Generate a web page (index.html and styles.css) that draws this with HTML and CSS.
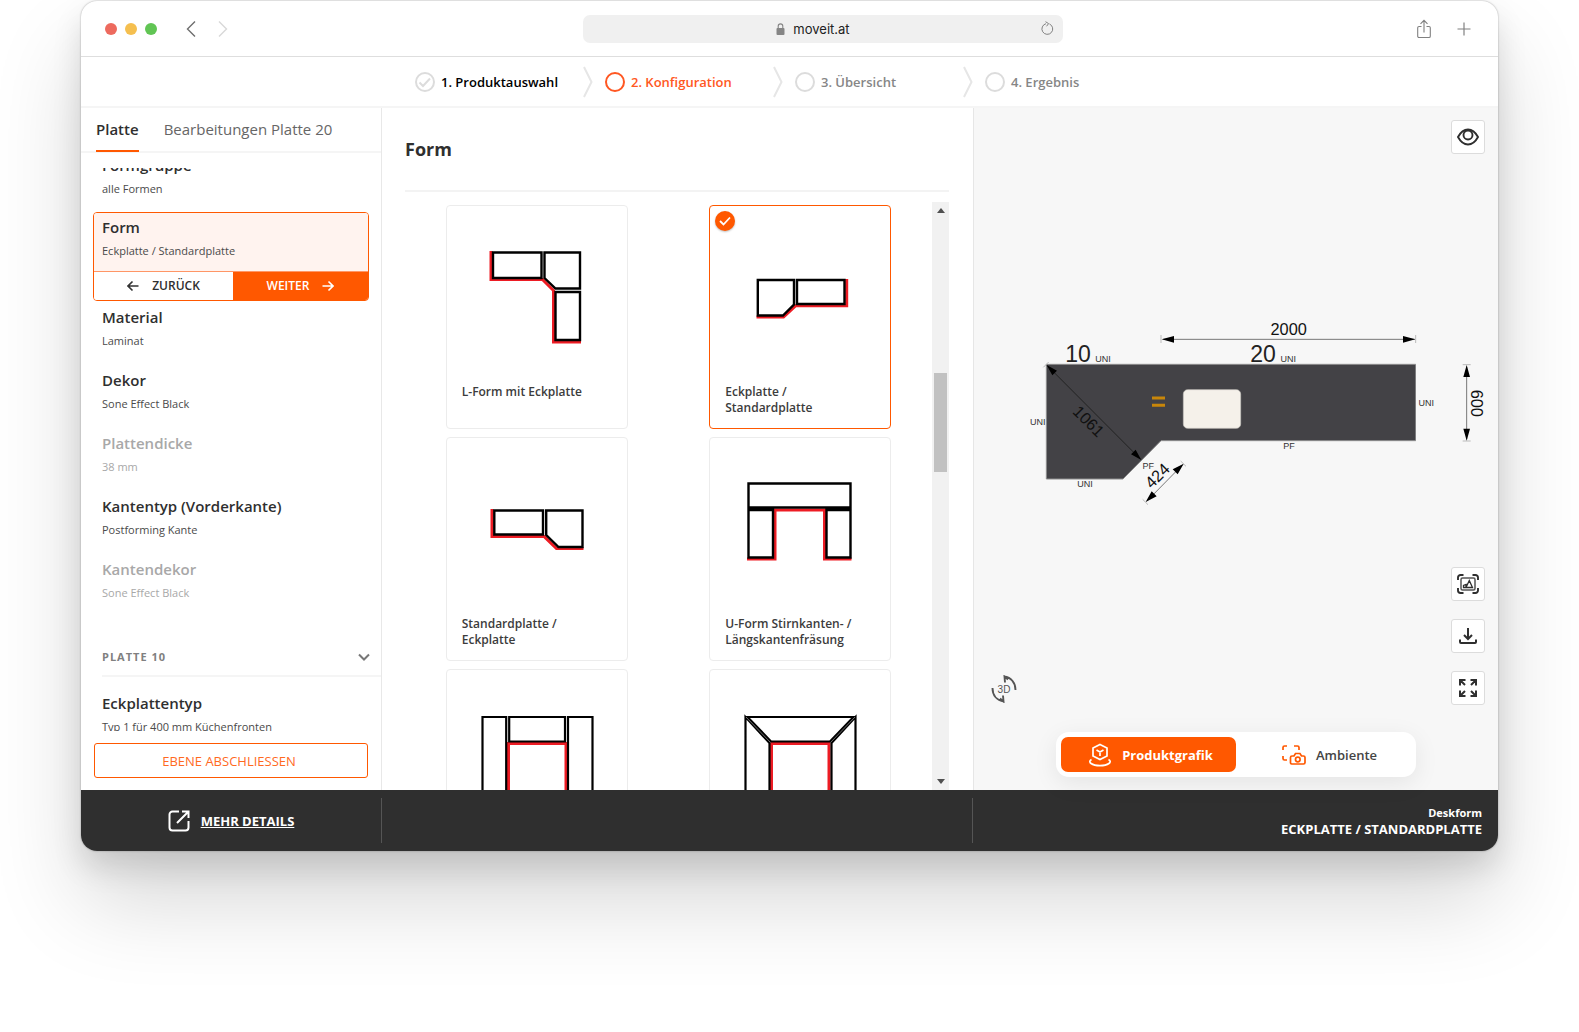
FILE: index.html
```html
<!DOCTYPE html>
<html lang="de">
<head>
<meta charset="utf-8">
<meta name="viewport" content="width=device-width, initial-scale=1">
<title>moveit.at – Konfiguration</title>
<link rel="stylesheet" href="styles.css">
</head>
<body>
<div class="window">
  <header class="titlebar">
    <div class="lights"><span class="light red"></span><span class="light yellow"></span><span class="light green"></span></div>
    <div class="history">
      <button class="plain" aria-label="Zurück"><svg width="10" height="18" viewBox="0 0 10 18"><path d="M9 1.500L1.500 9L9 16.500" fill="none" stroke="#6e6e6e" stroke-width="1.400"/></svg></button>
      <button class="plain" aria-label="Vor"><svg width="10" height="18" viewBox="0 0 10 18"><path d="M1 1.500L8.500 9L1 16.500" fill="none" stroke="#d8d8d8" stroke-width="1.400"/></svg></button>
    </div>
    <div class="address">
      <svg width="9" height="12" viewBox="0 0 9 12"><rect x="0.500" y="5" width="8" height="7" rx="1" fill="#858585"/><path d="M2.200 5.500V3.200a2.300 2.300 0 0 1 4.600 0v2.300" fill="none" stroke="#858585" stroke-width="1.100"/></svg>
      <span>moveit.at</span>
      <button class="plain reload" aria-label="Neu laden"><svg width="14" height="15" viewBox="0 0 14 15"><path d="M9.500 3A5.400 5.400 0 1 1 6 2.700M5.500 0.700L8.600 2.600L6.500 5.300" fill="none" stroke="#808080" stroke-width="1"/></svg></button>
    </div>
    <div class="bar-actions">
      <button class="plain" aria-label="Teilen"><svg width="14" height="20" viewBox="0 0 14 20"><path d="M4.500 7.500H2a1.300 1.300 0 0 0-1.300 1.300v8.400a1.300 1.300 0 0 0 1.300 1.300h10a1.300 1.300 0 0 0 1.300-1.300V8.800A1.300 1.300 0 0 0 12 7.500H9.500M7 13.500V1.500M3.500 4.800L7 1.300l3.500 3.500" fill="none" stroke="#808080" stroke-width="1.100"/></svg></button>
      <button class="plain" aria-label="Neuer Tab"><svg width="14" height="14" viewBox="0 0 14 14"><path d="M7 0.500v13M0.500 7h13" stroke="#808080" stroke-width="1.200"/></svg></button>
    </div>
  </header>

  <nav class="steps">
    <a href="#" class="step done"><svg width="20" height="20" viewBox="0 0 20 20"><circle cx="10" cy="10" r="9" fill="none" stroke="#dcdcdc" stroke-width="2"/><path d="M4.500 10.500l3.500 3.500l7-7.500" fill="none" stroke="#dcdcdc" stroke-width="2"/></svg>1. Produktauswahl</a>
    <svg class="sep" width="10" height="32" viewBox="0 0 10 32"><path d="M1 1L8.500 16L1 31" fill="none" stroke="#e6e6e6" stroke-width="2"/></svg>
    <a href="#" class="step current"><span class="ring"></span>2. Konfiguration</a>
    <svg class="sep" width="10" height="32" viewBox="0 0 10 32"><path d="M1 1L8.500 16L1 31" fill="none" stroke="#e6e6e6" stroke-width="2"/></svg>
    <a href="#" class="step"><span class="ring"></span>3. Übersicht</a>
    <svg class="sep" width="10" height="32" viewBox="0 0 10 32"><path d="M1 1L8.500 16L1 31" fill="none" stroke="#e6e6e6" stroke-width="2"/></svg>
    <a href="#" class="step"><span class="ring"></span>4. Ergebnis</a>
  </nav>

  <main class="workspace">
    <aside class="sidebar">
      <div class="tabs"><button class="tab active">Platte</button><button class="tab">Bearbeitungen Platte 20</button></div>
      <div class="list">
        <section class="item first"><h3>Formgruppe</h3><p>alle Formen</p></section>
        <div class="selected">
          <section class="item"><h3>Form</h3><p>Eckplatte / Standardplatte</p></section>
          <div class="nav-buttons">
            <button class="back"><svg width="12" height="12" viewBox="0 0 12 12"><path d="M11.500 6H1.500M5.500 1.500L1 6l4.500 4.500" fill="none" stroke="#333" stroke-width="1.600"/></svg>ZURÜCK</button>
            <button class="next">WEITER<svg width="12" height="12" viewBox="0 0 12 12"><path d="M0.500 6H10.500M6.500 1.500L11 6l-4.500 4.500" fill="none" stroke="#fff" stroke-width="1.600"/></svg></button>
          </div>
        </div>
        <section class="item"><h3>Material</h3><p>Laminat</p></section>
        <section class="item"><h3>Dekor</h3><p>Sone Effect Black</p></section>
        <section class="item off"><h3>Plattendicke</h3><p>38 mm</p></section>
        <section class="item"><h3>Kantentyp (Vorderkante)</h3><p>Postforming Kante</p></section>
        <section class="item off"><h3>Kantendekor</h3><p>Sone Effect Black</p></section>
        <button class="group">PLATTE 10<svg width="12" height="8" viewBox="0 0 12 8"><path d="M1 1.500l5 5l5-5" fill="none" stroke="#777" stroke-width="2"/></svg></button>
        <section class="item last"><h3>Eckplattentyp</h3><p>Typ 1 für 400 mm Küchenfronten</p></section>
      </div>
      <button class="finish">EBENE ABSCHLIESSEN</button>
    </aside>

    <section class="chooser">
      <h2>Form</h2>
      <div class="scroller">
        <div class="cards">
          <button class="card">
            <svg viewBox="0 0 180 174" fill="none"><path d="M44 45V73.500H95.500L106.500 84.500V136H134" stroke="#ed1c24" stroke-width="3"/><path d="M46 46.500H94.500V72H46ZM97.500 46.500H133V82.500H108.500L97.500 72ZM108.500 86H133V134H108.500Z" fill="#fff" stroke="#000" stroke-width="2.400"/></svg>
            <span>L-Form mit Eckplatte</span>
          </button>
          <button class="card chosen">
            <i class="badge"><svg width="12" height="10" viewBox="0 0 12 10"><path d="M1 5l3.500 3.500L11 1.500" fill="none" stroke="#fff" stroke-width="1.800"/></svg></i>
            <svg viewBox="0 0 180 174" fill="none"><path d="M46.500 111H73.500L85.500 99.800H136.700V73" stroke="#ed1c24" stroke-width="3"/><path d="M47.800 74H84V98.500L73 109.500H47.800ZM87 74H134.500V98H87Z" fill="#fff" stroke="#000" stroke-width="2.400"/></svg>
            <span>Eckplatte / Standardplatte</span>
          </button>
          <button class="card">
            <svg viewBox="0 0 180 174" fill="none"><path d="M45 71V98.500H97L109.500 110.500H136.500" stroke="#ed1c24" stroke-width="3"/><path d="M47.300 72.500H96V96.500H47.300ZM99.200 72.500H135.500V109H111.500L99.200 97Z" fill="#fff" stroke="#000" stroke-width="2.400"/></svg>
            <span>Standardplatte / Eckplatte</span>
          </button>
          <button class="card">
            <svg viewBox="0 0 180 174" fill="none"><path d="M37 121H65V72H114.500V121H141.500" stroke="#ed1c24" stroke-width="3"/><path d="M38.500 45.500H140.500V69.500H38.500ZM38.500 72H63V119.500H38.500ZM116.500 72H140.500V119.500H116.500Z" fill="#fff" stroke="#000" stroke-width="2.400"/></svg>
            <span>U-Form Stirnkanten- / Längskantenfräsung</span>
          </button>
          <button class="card" aria-label="U-Form">
            <svg viewBox="0 0 180 174" fill="none"><path d="M61.500 140V73.500H119V140" stroke="#ed1c24" stroke-width="3"/><path d="M35.500 47H59.200V160H35.500ZM62.200 47H118V71.500H62.200ZM121 47H145.500V160H121Z" stroke="#000" stroke-width="2.200"/></svg>
          </button>
          <button class="card" aria-label="U-Form mit Gehrung">
            <svg viewBox="0 0 180 174" fill="none"><path d="M61.500 140V73.500H119V140" stroke="#ed1c24" stroke-width="3"/><path d="M35.500 160V47L59.500 73V160M145.500 160V47L121.500 73V160M37.500 47H143.500L120 71.500H61Z" stroke="#000" stroke-width="2.200"/><path d="M36 47L60.500 72.500M145 47L120.500 72.500" stroke="#888" stroke-width="0.800"/></svg>
          </button>
        </div>
        <div class="track"><i class="arrow up"></i><i class="thumb"></i><i class="arrow down"></i></div>
      </div>
    </section>

    <section class="preview">
      <svg class="plan" viewBox="0 0 1410 630">
        <path d="M79 163H1187V392H423L309 507H79Z" fill="#434246"/>
        <path d="M79 163H1187M1187 392H423L309 507H79V163" fill="none" stroke="#8d8d8d" stroke-width="3"/>
        <rect x="490" y="239" width="172" height="116" rx="13" fill="#f5f1ea" stroke="#c9c6c0" stroke-width="2"/>
        <path d="M396 264H435M396 286H435" stroke="#c8860a" stroke-width="9"/>
        <g stroke="#777" stroke-width="3"><path d="M430 88H1184"/><path d="M1340 170V388"/><path d="M380 574L488 464"/><path d="M423 75V99M1187 75V99M1328 164H1352M1328 393H1352M70 172L86 156M368 568L384 584M482 453L498 469" stroke="#bbb"/></g>
        <path d="M82 167L362 448" stroke="#222" stroke-width="3"/>
        <path d="M425 88L462 78V98ZM1186 88L1149 78V98ZM1340 165L1330 201H1350ZM1340 392L1330 356H1350ZM80 165L97 196L111 182ZM364 450L347 419L333 433ZM377 576L395 544L410 559ZM491 461L473 493L458 478Z" fill="#000"/>
        <g fill="#222" font-family="Liberation Sans, Arial, sans-serif">
          <g font-size="49" text-anchor="middle" fill="#111"><text x="806" y="74">2000</text><text transform="translate(1353 280) rotate(90)">600</text><text transform="translate(194 346) rotate(45)">1061</text><text transform="translate(424 509) rotate(-45)">424</text></g>
          <g font-size="69" text-anchor="middle"><text x="174" y="156">10</text><text x="729" y="156">20</text></g>
          <g font-size="27" text-anchor="middle" fill="#333"><text x="249" y="155">UNI</text><text x="805" y="155">UNI</text><text x="53" y="344">UNI</text><text x="1219" y="287">UNI</text><text x="195" y="532">UNI</text><text x="385" y="477">PF</text><text x="807" y="417">PF</text></g>
        </g>
      </svg>
      <div class="tools">
        <button class="tool eye" aria-label="Ansicht"><svg width="22" height="18" viewBox="0 0 22 18" fill="none" stroke="#2f2f2f" stroke-width="1.900"><path d="M1 9C4 3.500 7.500 1.500 11 1.500S18 3.500 21 9C18 14.500 14.500 16.500 11 16.500S4 14.500 1 9Z"/><circle cx="11" cy="7" r="4.500"/></svg></button>
        <button class="tool" aria-label="Bild"><svg width="22" height="20" viewBox="0 0 22 20" fill="none" stroke="#2f2f2f" stroke-width="1.900"><path d="M1 6V3.500A2.500 2.500 0 0 1 3.500 1H6.500M15.500 1H18.500A2.500 2.500 0 0 1 21 3.500V6M21 14V16.500A2.500 2.500 0 0 1 18.500 19H15.500M6.500 19H3.500A2.500 2.500 0 0 1 1 16.500V14"/><rect x="4" y="4" width="14" height="12" rx="1.500" stroke="#555" stroke-width="1.500"/><path d="M6.500 13.500V11.500L9 10.500V13.500L12.300 6.500L15.500 13.500Z" stroke-width="1.300"/></svg></button>
        <button class="tool" aria-label="Herunterladen"><svg width="18" height="18" viewBox="0 0 18 18" fill="none" stroke="#2f2f2f" stroke-width="2"><path d="M9 1V12M5 8L9 12L13 8M1 12.500V15A1 1 0 0 0 2 16H16A1 1 0 0 0 17 15V12.500"/></svg></button>
        <button class="tool" aria-label="Vollbild"><svg width="18" height="18" viewBox="0 0 18 18" fill="none" stroke="#2f2f2f" stroke-width="2"><path d="M1 6.500V1H6.500M1.500 1.500L6 6M11.500 1H17V6.500M16.500 1.500L12 6M1 11.500V17H6.500M1.500 16.500L6 12M17 11.500V17H11.500M16.500 16.500L12 12"/></svg></button>
      </div>
      <button class="plain rotate" aria-label="3D-Ansicht"><svg width="26" height="28" viewBox="0 0 26 28"><path d="M1.500 13C1.500 20 5.500 25.500 13 26.500M12 20.500L12.500 26.500L9 23.500M24.500 15C24.500 8 20.500 2.500 13 1.500M14 7.500L13.500 1.500L17 4.500" fill="none" stroke="#555" stroke-width="1.900"/><text x="13" y="17.500" font-size="10" text-anchor="middle" fill="#555" font-family="Liberation Sans, Arial, sans-serif">3D</text></svg></button>
      <div class="switch">
        <button class="mode on"><svg width="24" height="24" viewBox="0 0 24 24" fill="none" stroke="#fff" stroke-width="1.700"><path d="M12 1.500L19 5V13L12 16.500L5 13V5ZM8.500 7L12 9L15.500 7M12 9V13M3.500 16.500C-1 19 4 22.700 12 22.700S25 19 20.500 16.500"/></svg>Produktgrafik</button>
        <button class="mode"><svg width="24" height="20" viewBox="0 0 24 20" fill="none" stroke="#ff5800" stroke-width="1.700"><path d="M1 5V2.500A1.500 1.500 0 0 1 2.500 1H5M12 1H15.500A1.500 1.500 0 0 1 17 2.500V5M1 11V13.500A1.500 1.500 0 0 0 2.500 15H5M8.500 18V12.500A1.500 1.500 0 0 1 10 11H12L13.500 8.500H18L19.500 11H21.500A1.500 1.500 0 0 1 23 12.500V17.500A1.500 1.500 0 0 1 21.500 19H10A1.500 1.500 0 0 1 8.500 18Z"/><circle cx="15.800" cy="14.500" r="2.300"/></svg>Ambiente</button>
      </div>
    </section>
  </main>

  <footer class="summary">
    <div class="more"><svg width="22" height="22" viewBox="0 0 22 22" fill="none" stroke="#fff" stroke-width="2"><path d="M11 1.500H4.500A3 3 0 0 0 1.500 4.500V17.500A3 3 0 0 0 4.500 20.500H17.500A3 3 0 0 0 20.500 17.500V11M9 13L20 2M14 1.500H20.500V8"/></svg><a href="#">MEHR DETAILS</a></div>
    <div class="middle"></div>
    <div class="result"><small>Deskform</small><strong>ECKPLATTE / STANDARDPLATTE</strong></div>
  </footer>
</div>
</body>
</html>
```
FILE: styles.css
```css
* { box-sizing: border-box; }
body { margin: 0; padding: 1px 81px 0; min-height: 100vh; background: #fff; color: #2f2f2f; font: 13px/18px "Open Sans", "Noto Sans", sans-serif; }
h2, h3, p { margin: 0; }
button { font: inherit; color: inherit; cursor: pointer; }
a { color: inherit; text-decoration: none; }
svg { display: block; flex: none; }
.plain { border: 0; padding: 0; background: none; }

.window { background: #fff; border-radius: 16px; overflow: hidden; box-shadow: 0 0 2px rgba(0, 0, 0, .35), 0 16px 30px rgba(0, 0, 0, .12), 0 50px 90px rgba(0, 0, 0, .16); }

.titlebar { height: 56px; border-bottom: 1px solid #dedede; display: grid; grid-template-columns: 502px minmax(200px, 480px) 1fr; align-items: center; padding-right: 27px; }
.titlebar .lights { grid-area: 1 / 1; display: flex; gap: 8px; padding-left: 24px; }
.light { width: 12px; height: 12px; border-radius: 50%; }
.red { background: #ed6a5e; }
.yellow { background: #f5bf4f; }
.green { background: #61c554; }
.history { grid-area: 1 / 1; display: flex; gap: 22px; padding-left: 105px; width: max-content; }
.address { grid-area: 1 / 2; height: 28px; border-radius: 7px; background: #f0f0f0; display: flex; align-items: center; justify-content: center; gap: 8px; position: relative; padding-right: 20px; font: 13px/18px Inter, sans-serif; color: #222; }
.reload { position: absolute; right: 9px; top: 6px; }
.bar-actions { grid-area: 1 / 3; display: flex; justify-content: flex-end; align-items: center; gap: 26px; }

.steps { height: 51px; border-bottom: 2px solid #f5f5f5; display: flex; justify-content: center; align-items: center; padding-right: 11px; }
.step { width: 168px; display: flex; align-items: center; gap: 6px; font-weight: 600; color: #868686; white-space: nowrap; }
.step.done { color: #000; }
.step.current { color: #ff5722; }
.ring { width: 20px; height: 20px; border: 2px solid #dcdcdc; border-radius: 50%; }
.current .ring { border-color: #ff5722; }
.sep { margin-right: 12px; }

.workspace { display: grid; grid-template-columns: 301px minmax(0, 591fr) minmax(0, 525fr); height: 682px; }
.sidebar { border-right: 1px solid #e8e8e8; display: flex; flex-direction: column; min-height: 0; }
.tabs { display: flex; gap: 25px; padding-left: 15px; height: 45px; border-bottom: 2px solid #f5f5f5; flex: none; }
.tab { border: 0; border-bottom: 2px solid transparent; background: none; padding: 0; height: 44px; font-size: 15px; color: #666; }
.tab.active { font-weight: 600; color: #2f2f2f; border-color: #ff5800; }
.list { height: 563px; overflow: hidden; margin: 15px 0 0 12px; }
.item { height: 63px; padding: 5px 0 0 9px; }
.item h3 { font-size: 15px; line-height: 22px; font-weight: 600; }
.item p { font-size: 11px; line-height: 16px; margin-top: 5px; color: #4a4a4a; }
.item.first { height: 44px; padding: 0 0 0 9px; }
.first h3 { margin-top: -14px; }
.off h3, .off p { color: #a8a8a8; }
.selected { width: 276px; border: 1px solid #ff5800; border-radius: 4px; overflow: hidden; height: 89px; }
.list .item.first { display: flow-root; }
.selected .item { background: #fff3ef; height: 59px; padding: 3px 0 0 8px; border-bottom: 1px solid #ff9666; }
.nav-buttons { display: grid; grid-template-columns: 139px 1fr; height: 28px; }
.nav-buttons button { border: 0; background: #fff; display: flex; align-items: center; justify-content: center; gap: 13px; font-size: 12px; font-weight: 600; padding: 0; }
.nav-buttons .next { background: #ff5800; color: #fff; }
.group { border: 0; border-bottom: 2px solid #f5f5f5; background: none; margin-left: 9px; width: calc(100% - 9px); height: 38px; margin-top: 23px; padding: 0 11px 0 0; display: flex; justify-content: space-between; align-items: center; font-size: 11px; font-weight: 700; letter-spacing: 1px; color: #808080; }
.item.last { padding-top: 15px; }
.finish { height: 35px; margin: 12px 13px 0 13px; flex: none; border: 1px solid #ff5800; border-radius: 3px; background: #fff; color: #ff6a1f; padding: 0 4px 0 0; }

.chooser { display: flex; flex-direction: column; padding: 0 24px 0 23px; min-height: 0; overflow: hidden; }
.chooser h2 { flex: none; height: 84px; padding-top: 29px; font-size: 18px; line-height: 24px; font-weight: 700; border-bottom: 2px solid #f3f3f3; margin-bottom: 10px; }
.scroller { display: flex; flex: 1; min-height: 0; }
.cards { flex: 1; display: grid; grid-template-columns: 1fr 1fr; justify-items: center; align-content: start; row-gap: 8px; padding-top: 3px; }
.card { width: 182px; height: 224px; border: 1px solid #ececec; border-radius: 4px; background: #fff; padding: 0; text-align: left; display: flex; flex-direction: column; position: relative; }
.card > svg { width: 180px; height: 174px; }
.card span { padding: 0 15px; margin-top: 4px; font-size: 12px; line-height: 16px; font-weight: 600; color: #3c3c3c; }
.card.chosen { border-color: #ff5800; }
.badge { position: absolute; left: 5px; top: 5px; width: 20px; height: 20px; border-radius: 50%; background: #ff5800; display: grid; place-items: center; box-shadow: 0 1px 2px rgba(0, 0, 0, .25); }
.track { width: 17px; background: #f1f1f1; display: flex; flex-direction: column; align-items: center; padding: 6px 0; }
.thumb { width: 13px; height: 99px; margin-top: 160px; background: #c1c1c1; }
.arrow { border: 4px solid transparent; }
.up { border-top: 0; border-bottom: 5px solid #505050; }
.down { border-bottom: 0; border-top: 5px solid #505050; margin-top: auto; }

.preview { border-left: 1px solid #e6e6e6; background: #f7f7f7; position: relative; display: flex; flex-direction: column; align-items: center; justify-content: space-between; padding: 202px 0 13px 0; }
.plan { width: 470px; height: 210px; align-self: flex-end; margin-right: 8px; }
.tools { position: absolute; right: 13px; top: 12px; display: flex; flex-direction: column; gap: 18px; }
.tool { width: 34px; height: 34px; padding: 0; border: 1px solid #dcdcdc; border-radius: 3px; background: #fff; display: grid; place-items: center; }
.eye { margin-bottom: 395px; }
.rotate { position: absolute; left: 17px; bottom: 87px; }
.switch { display: grid; grid-template-columns: 175px 175px; width: 360px; padding: 5px; height: 45px; border-radius: 13px; background: #fff; box-shadow: 0 6px 24px rgba(0, 0, 0, .08); }
.mode { border: 0; border-radius: 7px; background: none; display: flex; align-items: center; justify-content: center; gap: 10px; font-weight: 600; padding: 0 0 0 12px; color: #444; }
.mode.on { padding-left: 4px; background: #ff5800; color: #fff; font-weight: 700; }

.summary { display: grid; grid-template-columns: 301px minmax(0, 591fr) minmax(0, 525fr); height: 61px; padding: 8px 0; background: #2f2f2f; color: #fff; }
.summary > div { border-right: 1px solid #555; display: flex; }
.more { align-items: center; justify-content: center; gap: 11px; font-weight: 700; }
.more a { text-decoration: underline; }
.summary .result { border: 0; flex-direction: column; align-items: flex-end; justify-content: center; padding-right: 16px; line-height: 16px; }
.result small { font-size: 11px; font-weight: 700; }
.result strong { font-size: 13px; }
```
